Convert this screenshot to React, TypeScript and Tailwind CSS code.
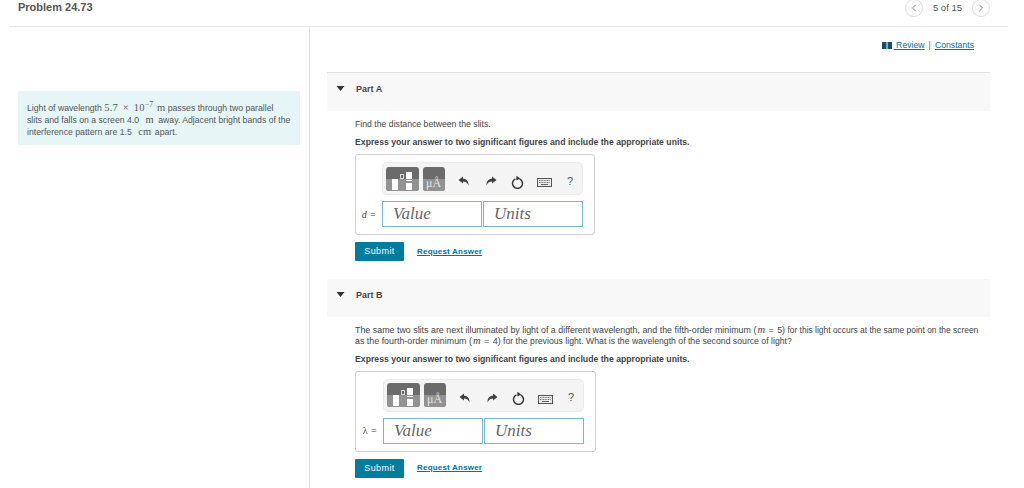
import { ChevronLeft, ChevronRight } from 'lucide-react';

const sans = "font-['Liberation_Sans',Arial,sans-serif]";
const serif = "font-['Liberation_Serif','Times_New_Roman',serif]";

function MathText({ children }: { children: React.ReactNode }) {
  return <span className={`${serif} text-[10.5px] tracking-[0.2px]`}>{children}</span>;
}

function OrderEq({ n }: { n: number }) {
  return (
    <span className="text-[8.9px] whitespace-nowrap">
      (<i className={`${serif} text-[10.5px] ml-[1px]`}>m</i>
      <span className="mx-[3.5px]">=</span>
      {n})
    </span>
  );
}

function Undo({ flip }: { flip?: boolean }) {
  return (
    <svg width="11" height="10" viewBox="0 0 11 10" className={flip ? '-scale-x-100' : ''}>
      <path d="M0.5 4 L5 0.5 V2.8 C8.5 2.8 10.5 5 10.5 9.5 C9.4 6.8 7.8 5.4 5 5.4 V7.6 Z" fill="#3f3f3f" />
    </svg>
  );
}

function Toolbar() {
  return (
    <div className="h-[33px] w-[201px] flex items-center pl-[3px] bg-[#f4f4f4] border border-[#ebebeb] rounded-[5px]">
      <div className="relative w-[33px] h-[24px] rounded-[3px] overflow-hidden bg-[#6b6b6b]">
        <div className="absolute left-0 right-0 bottom-0 h-[12px] bg-[#929292]" />
        <div className="absolute left-[6px] top-[12px] w-[6px] h-[11px] bg-white" />
        <div className="absolute left-[14px] top-[7px] w-[4px] h-[5px] border border-[#d8d8d8]" />
        <div className="absolute left-[20px] top-[5px] w-[6px] h-[7px] bg-white" />
        <div className="absolute left-[20px] top-[13px] w-[6px] h-[1px] bg-white" />
        <div className="absolute left-[20px] top-[16px] w-[6px] h-[7px] bg-white" />
      </div>
      <div className="relative w-[22px] h-[24px] ml-[4px] rounded-[3px] overflow-hidden bg-[#6b6b6b]">
        <div className="absolute left-0 right-0 bottom-0 h-[12px] bg-[#929292]" />
        <span className={`absolute left-[3px] top-[9px] text-[12px] leading-[14px] text-[#e6e6e6] ${serif}`}>μÅ</span>
      </div>
      <div className="ml-[13px] mt-[5px] flex"><Undo /></div>
      <div className="ml-[17px] mt-[5px] flex"><Undo flip /></div>
      <svg className="ml-[14px] mt-[6px]" width="13" height="14" viewBox="0 0 13 14" fill="none">
        <path d="M4.4 3.9 A5 5 0 1 0 8.6 3.9" stroke="#333" strokeWidth="1.4" />
        <path d="M5.4 0.8 L9.2 3.6 L5.4 5.6 Z" fill="#333" />
      </svg>
      <svg className="ml-[13px] mt-[8px]" width="15" height="9" viewBox="0 0 15 9">
        <rect x="0.5" y="0.5" width="14" height="8" fill="#e9e9e9" stroke="#555" />
        <path d="M2 2.5h11M2 4.5h11" stroke="#777" strokeDasharray="1 0.6" />
        <path d="M4 6.5h7" stroke="#666" />
      </svg>
      <span className={`ml-[15px] mt-[5px] text-[11px] text-[#555] ${sans}`}>?</span>
    </div>
  );
}

function AnswerBox({ label, tall }: { label: React.ReactNode; tall?: boolean }) {
  return (
    <div>
      <div className={`h-[81px] ${tall ? 'w-[241px]' : 'w-[240px]'} border border-[#cfcfcf] rounded-[3px] pt-[7px] flex flex-col items-end pr-[11px]`}>
        <Toolbar />
        <div className="flex items-center mt-[6px]">
          <span className={`text-[10px] text-[#444] mr-[6px] tracking-[0.4px] ${serif}`}>{label}</span>
          <div className={`w-[100px] h-[26px] border border-[#76b8cc] pl-[10px] text-[17px] leading-[24px] italic text-[#666] ${serif}`}>Value</div>
          <div className={`w-[100px] h-[26px] ml-px border border-[#76b8cc] pl-[10px] text-[17px] leading-[24px] italic text-[#666] ${serif}`}>Units</div>
        </div>
      </div>
      <div className="flex items-center mt-[7px]">
        <div className="w-[49px] h-[19px] bg-[#007c9e] rounded-[1px] text-white text-[9px] leading-[19px] text-center tracking-[0.4px]">Submit</div>
        <a className="ml-[13px] text-[#00739a] text-[8px] font-bold underline tracking-[0.2px]">Request Answer</a>
      </div>
    </div>
  );
}

function PartHeader({ name }: { name: string }) {
  return (
    <div className="h-[38px] bg-[#f8f8f8] flex pt-[11px] pl-[9px]">
      <svg className="mt-[2px]" width="9" height="5" viewBox="0 0 9 5"><path d="M0.5 0 H8.5 L4.5 5 Z" fill="#333" /></svg>
      <span className="ml-[11px] text-[9px] leading-[11px] font-bold text-[#444]">{name}</span>
    </div>
  );
}

export default function App() {
  return (
    <div className={`w-[1024px] h-[488px] overflow-hidden bg-white ${sans} text-[#444]`}>
      {/* top bar */}
      <div className="ml-[9px] w-[999px] h-[27px] border-b border-[#e6e6e6] flex justify-between items-start pl-[9px] pr-[18px]">
        <h1 className="text-[11px] leading-[14px] font-bold text-[#555]">Problem 24.73</h1>
        <div className="flex items-center text-[9.5px] text-[#555] -mt-px">
          <div className="w-[18px] h-[18px] rounded-full border border-[#ddd] flex items-center justify-center">
            <ChevronLeft size={12} strokeWidth={1.5} color="#666" />
          </div>
          <span className="mx-[10px]">5 of 15</span>
          <div className="w-[18px] h-[18px] rounded-full border border-[#ddd] flex items-center justify-center">
            <ChevronRight size={12} strokeWidth={1.5} color="#666" />
          </div>
        </div>
      </div>

      <div className="flex h-[461px]">
        {/* problem statement */}
        <div className="w-[310px] pl-[18px] pr-[9px] pt-[64px] border-r border-[#dfe5ee]">
          <div className="h-[54px] bg-[#e6f5f6] pl-[9px] pt-[11px] text-[8.7px] leading-[11px] text-[#555] whitespace-nowrap">
            Light of wavelength <MathText>5.7 <span className="mx-[2px]">×</span> 10<sup className="text-[7.5px]">−7</sup> <span className="ml-[1px]">m</span></MathText> passes through two parallel
            <br />
            slits and falls on a screen 4.0 <span className="ml-[4px] mr-[2px]"><MathText>m</MathText></span> away. Adjacent bright bands of the
            <br />
            interference pattern are 1.5 <span className="ml-[4px] mr-[1px]"><MathText>cm</MathText></span> apart.
          </div>
        </div>

        {/* parts */}
        <div className="w-[663px] ml-[17px]">
          <div className="h-[45px] flex items-start justify-end pt-[13px] pr-[16px] text-[8.7px] leading-[11px] text-[#00739a]">
            <svg className="mt-[2px] mr-[2px]" width="10" height="7" viewBox="0 0 10 7"><path d="M0 0h4.5v7H0zM5.5 0H10v7H5.5z" fill="#14506e" /></svg>
            <span className="underline">&nbsp;Review</span>
            <span className="mx-[4px] text-[#666]">|</span>
            <span className="underline">Constants</span>
          </div>

          <div className="border-t border-[#e2e2e2]">
            <PartHeader name="Part A" />
            <div className="pl-[28px]">
              <p className="mt-[8px] text-[8.7px] leading-[10.5px]">Find the distance between the slits.</p>
              <p className="mt-[7px] mb-[7px] text-[8.7px] leading-[10.5px] font-bold">Express your answer to two significant figures and include the appropriate units.</p>
              <AnswerBox label={<><i>d</i> =</>} />
            </div>
          </div>

          <div className="mt-[18px]">
            <PartHeader name="Part B" />
            <div className="pl-[28px]">
              <p className="mt-[8px] text-[8.45px] leading-[10.5px] whitespace-nowrap">
                <span className="text-[8.9px]">The same two slits are next illuminated by light of a different wavelength, and the fifth-order minimum </span>
                <OrderEq n={5} /> for this light occurs at the same point on the screen
                <br />
                <span className="text-[8.9px]">as the fourth-order minimum </span>
                <OrderEq n={4} />
                <span className="text-[8.7px]"> for the previous light. What is the wavelength of the second source of light?</span>
              </p>
              <p className="mt-[8px] mb-[6px] text-[8.7px] leading-[10.5px] font-bold">Express your answer to two significant figures and include the appropriate units.</p>
              <AnswerBox label="λ =" tall />
            </div>
          </div>
        </div>
      </div>
    </div>
  );
}
